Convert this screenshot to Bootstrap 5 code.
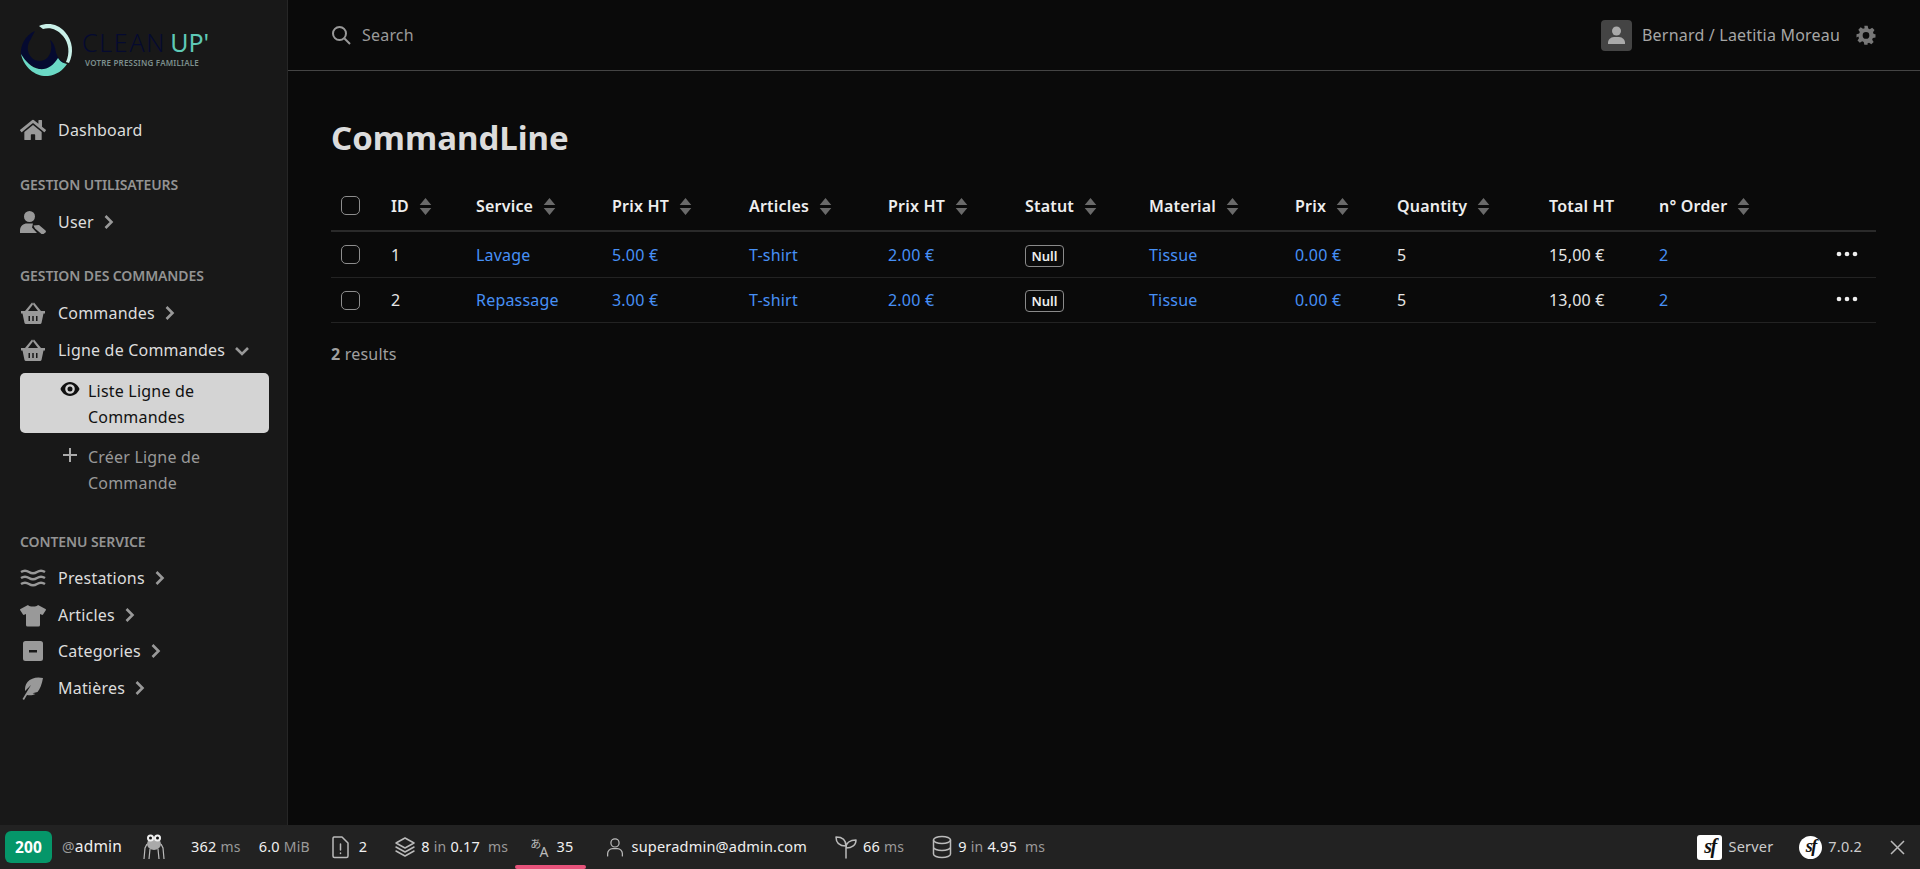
<!DOCTYPE html>
<html lang="fr" data-bs-theme="dark">
<head>
  <meta charset="UTF-8">
  <title>CommandLine</title>
  <link href="https://cdn.jsdelivr.net/npm/bootstrap@5.3.0/dist/css/bootstrap.min.css" rel="stylesheet">
  <style>
    html, body { height: 100%; }
    body {
      background: #0a0a0a;
      color: #ddd;
      font-family: "Noto Sans", "Open Sans", sans-serif;
      font-size: 16px;
      letter-spacing: 0.2px;
      overflow: hidden;
    }
    .app-top { height: 825px; }

    /* sidebar */
    .side-bar { width: 288px; background: #181818; border-right: 1px solid #262626; padding: 22px 18px 0 20px; flex-shrink: 0; }
    .logo-box { height: 56px; margin-bottom: 34px; }
    .logo-word { font-size: 25px; line-height: 26px; font-weight: 300; letter-spacing: 1.7px; color: #050a30; margin-top: 7px; white-space: nowrap; }
    .logo-word span { color: #5ec9b6; font-weight: 400; margin-left: 4px; letter-spacing: 0; }
    .logo-sub { font-size: 8px; line-height: 10px; color: #7d8f8d; letter-spacing: 0.2px; font-weight: 600; margin-top: 3px; padding-left: 3px; white-space: nowrap; }
    .side-item { height: 36.5px; color: #ddd; text-decoration: none; }
    .side-ico { width: 26px; height: 24px; fill: #999; color: #999; margin-right: 12px; flex-shrink: 0; }
    .side-chev { width: 10px; height: 16px; margin-left: 10px; fill: none; stroke: #999; stroke-width: 2.6; }
    .side-chev-down { width: 16px; height: 10px; margin-left: 9px; margin-top: 3px; fill: none; stroke: #999; stroke-width: 2.6; }
    .side-label { font-size: 14px; line-height: 20px; font-weight: 600; color: #939393; text-transform: uppercase; margin: 26px 0 9px; letter-spacing: -0.1px; }
    .side-label.wide-gap { margin-top: 33px; margin-bottom: 8px; }
    .sub-item { width: 249px; line-height: 26px; padding: 5px 8px 3px 68px; border-radius: 5px; position: relative; display: block; text-decoration: none; }
    .sub-item.on { background: #d4d4d4; color: #111; margin-top: 5px; }
    .sub-item.off { color: #999; margin-top: 6px; }
    .sub-ico { position: absolute; left: 40px; top: 6px; width: 20px; height: 20px; }

    /* header */
    .top-head { height: 71px; border-bottom: 1px solid #444; padding: 0 44px 0 43px; }
    .search-word { color: #9a9a9a; margin-left: 11px; }
    .user-pic { width: 31px; height: 31px; background: #444; border-radius: 4px; margin-right: 10px; }
    .user-name { color: #a6a6a6; }

    /* content */
    .page-body { padding: 0 44px 0 43px; }
    .page-name { font-size: 33px; line-height: 40px; font-weight: 700; color: #dcdcdc; margin: 47px 0 24px; letter-spacing: 0; }
    .cmd-table { table-layout: fixed; width: 1545px; margin: 0; --bs-table-bg: transparent; --bs-table-color: #e6e6e6; --bs-table-border-color: #232323; }
    .cmd-table col:nth-child(1) { width: 48px; }
    .cmd-table col:nth-child(2) { width: 85px; }
    .cmd-table col:nth-child(3) { width: 136px; }
    .cmd-table col:nth-child(4) { width: 137px; }
    .cmd-table col:nth-child(5) { width: 139px; }
    .cmd-table col:nth-child(6) { width: 137px; }
    .cmd-table col:nth-child(7) { width: 124px; }
    .cmd-table col:nth-child(8) { width: 146px; }
    .cmd-table col:nth-child(9) { width: 102px; }
    .cmd-table col:nth-child(10) { width: 152px; }
    .cmd-table col:nth-child(11) { width: 110px; }
    .cmd-table col:nth-child(12) { width: 133px; }
    .cmd-table col:nth-child(13) { width: 96px; }
    .cmd-table th, .cmd-table td { padding: 0 12px; vertical-align: middle; white-space: nowrap; }
    .cmd-table thead th { height: 49px; font-weight: 600; color: #eee; border-bottom: 2px solid #2a2a2a; padding-bottom: 1px; }
    .cmd-table tbody td { height: 45px; font-size: 16px; padding-top: 1px; }
    .cmd-table tbody tr:first-child td { height: 46px; }
    .cmd-table a { color: #4790f6; text-decoration: none; }
    .cmd-table .form-check-input { width: 19px; height: 19px; margin: 0 0 0 -2px; background-color: transparent; border: 1px solid #8d8d8d; border-radius: 5px; display: block; }
    .sort-ico { width: 13px; height: 17px; fill: #6a6a6a; margin-left: 10px; vertical-align: -3px; }
    .null-tag { display: inline-block; width: 39px; height: 22px; line-height: 20px; text-align: center; border: 1px solid #8a8a8a; border-radius: 4px; font-size: 13px; font-weight: 600; color: #eee; letter-spacing: 0; }
    .dots-ico { width: 22px; height: 6px; fill: #eee; display: block; margin-left: 44px; margin-top: -2px; }
    .result-line { color: #a0a0a0; margin-top: 20px; line-height: 22px; }

    /* debug toolbar */
    .dbg-bar { height: 44px; background: #222; color: #f0f0f0; font-size: 14.5px; padding: 0 15px 0 5px; flex-shrink: 0; }
    .dbg-code { width: 47px; height: 32px; line-height: 32px; background: #059669; border-radius: 6px; text-align: center; font-weight: 700; color: #fff; font-size: 15.5px; }
    .dbg-mute { color: #9a9a9a; font-size: 14px; }
    .dbg-name { font-size: 15.5px; }
    .dbg-soft { color: #ccc; }
    .dbg-ico { fill: none; stroke: #bbb; stroke-width: 1.5; stroke-linecap: round; stroke-linejoin: round; }
    .dbg-cell { height: 44px; }
    .dbg-lang { position: relative; padding: 0 12px 0 15px; }
    .dbg-lang::after { content: ""; position: absolute; left: 0; right: 0; bottom: 0; height: 4px; background: #e8537b; border-radius: 2px; }
    .lang-kana { font-family: "Noto Sans CJK JP", sans-serif; font-size: 11px; color: #bbb; position: relative; top: -4px; }
    .lang-latin { font-size: 14px; color: #bbb; position: relative; top: 4px; margin-left: -2px; }
    .sf-mark { display: inline-block; background: #fff; color: #111; font-family: "Liberation Serif", serif; font-style: italic; font-weight: 700; text-align: center; letter-spacing: -1.5px; }
    .sf-square { width: 25px; height: 25px; line-height: 23px; font-size: 20px; border-radius: 3px; }
    .sf-round { width: 23px; height: 23px; line-height: 21px; font-size: 18px; border-radius: 50%; }
    .m-a { margin-left: 10px; } .m-b { margin-left: 21px; } .m-c { margin-left: 26px; } .m-d { margin-left: 18px; }
    .m-e { margin-left: 21px; } .m-f { margin-left: 28px; } .m-g { margin-left: 7px; } .m-h { margin-left: 6px; } .m-i { margin-left: 8px; }
    .m-j { margin-left: 20px; }
  </style>
</head>
<body class="d-flex flex-column">

<svg width="0" height="0" class="position-absolute">
  <symbol id="i-house" viewBox="0 0 576 512"><path d="M280.37 148.26L96 300.11V464a16 16 0 0 0 16 16l112.06-.29a16 16 0 0 0 15.92-16V368a16 16 0 0 1 16-16h64a16 16 0 0 1 16 16v95.64a16 16 0 0 0 16 16.05L464 480a16 16 0 0 0 16-16V300L295.67 148.26a12.19 12.19 0 0 0-15.3 0zM571.6 251.47L488 182.56V44.05a12 12 0 0 0-12-12h-56a12 12 0 0 0-12 12v72.61L318.47 43a48 48 0 0 0-61 0L4.34 251.47a12 12 0 0 0-1.6 16.9l25.5 31A12 12 0 0 0 45.15 301l235.22-193.74a12.19 12.19 0 0 1 15.3 0L530.9 301a12 12 0 0 0 16.9-1.6l25.5-31a12 12 0 0 0-1.7-16.93z"/></symbol>
  <symbol id="i-usertag" viewBox="0 0 26 24"><circle cx="9.5" cy="6.5" r="5.5"/><path d="M0 23v-2.5C0 16 3.5 13.5 7 13.5h6l-1 4 5 5.500z"/><path d="M13.500 15.500l5.500-.5 6.500 5.500a1.500 1.500 0 0 1 0 2l-2 1.500a1.500 1.500 0 0 1-2 0l-6.500-5.500z"/></symbol>
  <symbol id="i-basket" viewBox="0 0 26 24"><path d="M1 10h24v2.500h-1.500L21.500 22a1.500 1.500 0 0 1-1.500 1H6a1.500 1.500 0 0 1-1.500-1L2.500 12.500H1z"/><path d="M5 10L12 1.500l1.500 1.200L8 10zM21 10L14 1.500l-1.500 1.200L18 10z"/><path fill="#181818" d="M8.500 15h1.500v5H8.500zM12.250 15h1.500v5h-1.500zM16 15h1.500v5H16z"/></symbol>
  <symbol id="i-water" viewBox="0 0 26 24"><path fill="none" stroke="currentColor" stroke-width="2.400" d="M1 6c3-2 5-2 8 0s5 2 8 0 5-2 8 0M1 12c3-2 5-2 8 0s5 2 8 0 5-2 8 0M1 18c3-2 5-2 8 0s5 2 8 0 5-2 8 0"/></symbol>
  <symbol id="i-shirt" viewBox="0 0 26 24"><path d="M8 2C9.500 4 16.500 4 18 2l7.500 4a1 1 0 0 1 .3 1.300L23 11.500a1 1 0 0 1-1.200.3L20 11v11a1.500 1.500 0 0 1-1.500 1.500h-11A1.500 1.500 0 0 1 6 22V11l-1.800.8a1 1 0 0 1-1.200-.3L.2 7.300A1 1 0 0 1 .5 6z"/></symbol>
  <symbol id="i-minus" viewBox="0 0 26 24"><path fill-rule="evenodd" d="M5.500 2h15A2.500 2.500 0 0 1 23 4.500v15a2.500 2.500 0 0 1-2.500 2.500h-15A2.500 2.500 0 0 1 3 19.500v-15A2.500 2.500 0 0 1 5.500 2zM9 11v2.500h8V11z"/></symbol>
  <symbol id="i-feather" viewBox="0 0 26 24"><path fill-rule="evenodd" d="M23 2c-6-1.500-12 0-15.500 4C5 9 5 12 5 15l6-6L2.500 23l1.500 1 3-5c3 .5 6 .3 8.500-1l-3-.7 5-1.300c2.500-3 4.500-8 5.500-14z"/></symbol>
  <symbol id="i-sort" viewBox="0 0 13 17"><path d="M6.500 0l5.800 7H.7zM6.500 17L.7 10h11.600z"/></symbol>
</svg>

<div class="app-top d-flex">
  <aside class="side-bar">
    <div class="logo-box d-flex">
      <svg width="54" height="56" viewBox="0 0 54 56" class="flex-shrink-0">
        <path d="M15 9C5 13 0 24 1 33c6 10 18 16 28 15 8-1 14-6 15-8-6-2-8-8-9-14-1-4-3-7-5-8 2 5 2 12-2 17-4 5-12 5-16 1-6-6-5-14-1-19 1-3 3-6 4-8z" fill="#050a30"/>
        <path d="M1 32c3 14 15 23 27 22 9-1 15-6 19-12-5-1-7-3-9-6-5 8-11 12-19 11C12 46 5 39 1 32z" fill="#6bd9c5"/>
        <path d="M19 4c9-4 19-2 26 6 8 9 9 21 4 31l-3-1c4-9 3-19-3-26-6-7-13-9-20-7z" fill="#c9f0e8"/>
      </svg>
      <div class="ms-2">
        <div class="logo-word">CLEAN<span>UP'</span></div>
        <div class="logo-sub">VOTRE PRESSING FAMILIALE</div>
      </div>
    </div>

    <a href="#" class="side-item d-flex align-items-center"><svg class="side-ico"><use href="#i-house"/></svg>Dashboard</a>

    <div class="side-label">Gestion utilisateurs</div>
    <a href="#" class="side-item d-flex align-items-center"><svg class="side-ico"><use href="#i-usertag"/></svg>User<svg class="side-chev" viewBox="0 0 10 16"><path d="M1.500 2l6 6-6 6"/></svg></a>

    <div class="side-label">Gestion des commandes</div>
    <a href="#" class="side-item d-flex align-items-center"><svg class="side-ico"><use href="#i-basket"/></svg>Commandes<svg class="side-chev" viewBox="0 0 10 16"><path d="M1.500 2l6 6-6 6"/></svg></a>
    <a href="#" class="side-item d-flex align-items-center"><svg class="side-ico"><use href="#i-basket"/></svg>Ligne de Commandes<svg class="side-chev-down" viewBox="0 0 16 10"><path d="M2 2l6 6 6-6"/></svg></a>
    <a href="#" class="sub-item on">
      <svg class="sub-ico" viewBox="0 0 20 20"><path fill="#111" fill-rule="evenodd" d="M10 3c5 0 8.500 4 9.500 7-1 3-4.500 7-9.500 7S1.500 13 .5 10C1.500 7 5 3 10 3zm0 2.200A4.800 4.800 0 1 0 10 14.800 4.800 4.800 0 0 0 10 5.200zm0 2.300a2.500 2.500 0 1 1 0 5 2.500 2.500 0 0 1 0-5z"/></svg>
      Liste Ligne de Commandes
    </a>
    <a href="#" class="sub-item off">
      <svg class="sub-ico" viewBox="0 0 20 20"><path fill="none" stroke="#aaa" stroke-width="2" d="M10 3v14M3 10h14"/></svg>
      Créer Ligne de Commande
    </a>

    <div class="side-label wide-gap">Contenu service</div>
    <a href="#" class="side-item d-flex align-items-center"><svg class="side-ico"><use href="#i-water"/></svg>Prestations<svg class="side-chev" viewBox="0 0 10 16"><path d="M1.500 2l6 6-6 6"/></svg></a>
    <a href="#" class="side-item d-flex align-items-center"><svg class="side-ico"><use href="#i-shirt"/></svg>Articles<svg class="side-chev" viewBox="0 0 10 16"><path d="M1.500 2l6 6-6 6"/></svg></a>
    <a href="#" class="side-item d-flex align-items-center"><svg class="side-ico"><use href="#i-minus"/></svg>Categories<svg class="side-chev" viewBox="0 0 10 16"><path d="M1.500 2l6 6-6 6"/></svg></a>
    <a href="#" class="side-item d-flex align-items-center"><svg class="side-ico"><use href="#i-feather"/></svg>Matières<svg class="side-chev" viewBox="0 0 10 16"><path d="M1.500 2l6 6-6 6"/></svg></a>
  </aside>

  <div class="flex-grow-1">
    <header class="top-head d-flex align-items-center justify-content-between">
      <div class="d-flex align-items-center">
        <svg width="20" height="20" viewBox="0 0 20 20" fill="none" stroke="#999" stroke-width="2"><circle cx="8.500" cy="8.500" r="6.500"/><path d="M13.500 13.500L19 19"/></svg>
        <span class="search-word">Search</span>
      </div>
      <div class="d-flex align-items-center">
        <span class="user-pic d-flex align-items-center justify-content-center">
          <svg width="19" height="19" viewBox="0 0 19 19" fill="#aaa"><circle cx="9.500" cy="5" r="4.500"/><path d="M1 18c-.5-4 2.500-7 6-7h5c3.500 0 6.500 3 6 7z"/></svg>
        </span>
        <span class="user-name">Bernard / Laetitia Moreau</span>
        <svg class="ms-3" width="20" height="20" viewBox="0 0 24 24" fill="#777"><path fill-rule="evenodd" d="M10 1h4l.7 3.200 1.900.8 2.800-1.800 2.800 2.800-1.800 2.800.8 1.900L23.400 11v4l-3.200.7-.8 1.900 1.800 2.800-2.800 2.800-2.800-1.800-1.900.8L14 23.600h-4l-.7-3.200-1.900-.8-2.800 1.800-2.800-2.800 1.800-2.800-.8-1.900L.6 15v-4l3.200-.7.8-1.900L2.800 5.600 5.600 2.800l2.800 1.800 1.900-.8zM12 8.500a4 4 0 1 0 0 8 4 4 0 0 0 0-8z"/></svg>
      </div>
    </header>

    <main class="page-body">
      <h1 class="page-name">CommandLine</h1>

      <table class="table cmd-table">
        <colgroup><col><col><col><col><col><col><col><col><col><col><col><col><col></colgroup>
        <thead>
          <tr>
            <th><input class="form-check-input" type="checkbox"></th>
            <th>ID<svg class="sort-ico"><use href="#i-sort"/></svg></th>
            <th>Service<svg class="sort-ico"><use href="#i-sort"/></svg></th>
            <th>Prix HT<svg class="sort-ico"><use href="#i-sort"/></svg></th>
            <th>Articles<svg class="sort-ico"><use href="#i-sort"/></svg></th>
            <th>Prix HT<svg class="sort-ico"><use href="#i-sort"/></svg></th>
            <th>Statut<svg class="sort-ico"><use href="#i-sort"/></svg></th>
            <th>Material<svg class="sort-ico"><use href="#i-sort"/></svg></th>
            <th>Prix<svg class="sort-ico"><use href="#i-sort"/></svg></th>
            <th>Quantity<svg class="sort-ico"><use href="#i-sort"/></svg></th>
            <th>Total HT</th>
            <th>n° Order<svg class="sort-ico"><use href="#i-sort"/></svg></th>
            <th></th>
          </tr>
        </thead>
        <tbody>
          <tr>
            <td><input class="form-check-input" type="checkbox"></td>
            <td>1</td>
            <td><a href="#">Lavage</a></td>
            <td><a href="#">5.00 €</a></td>
            <td><a href="#">T-shirt</a></td>
            <td><a href="#">2.00 €</a></td>
            <td><span class="null-tag">Null</span></td>
            <td><a href="#">Tissue</a></td>
            <td><a href="#">0.00 €</a></td>
            <td>5</td>
            <td>15,00 €</td>
            <td><a href="#">2</a></td>
            <td><svg class="dots-ico" viewBox="0 0 22 6"><circle cx="3" cy="3" r="2.300"/><circle cx="11" cy="3" r="2.300"/><circle cx="19" cy="3" r="2.300"/></svg></td>
          </tr>
          <tr>
            <td><input class="form-check-input" type="checkbox"></td>
            <td>2</td>
            <td><a href="#">Repassage</a></td>
            <td><a href="#">3.00 €</a></td>
            <td><a href="#">T-shirt</a></td>
            <td><a href="#">2.00 €</a></td>
            <td><span class="null-tag">Null</span></td>
            <td><a href="#">Tissue</a></td>
            <td><a href="#">0.00 €</a></td>
            <td>5</td>
            <td>13,00 €</td>
            <td><a href="#">2</a></td>
            <td><svg class="dots-ico" viewBox="0 0 22 6"><circle cx="3" cy="3" r="2.300"/><circle cx="11" cy="3" r="2.300"/><circle cx="19" cy="3" r="2.300"/></svg></td>
          </tr>
        </tbody>
      </table>

      <div class="result-line"><strong>2</strong> results</div>
    </main>
  </div>
</div>

<footer class="dbg-bar d-flex align-items-center">
  <div class="dbg-code">200</div>
  <div class="m-a"><span class="dbg-mute">@</span><span class="dbg-name">admin</span></div>
  <svg class="m-b" width="22" height="28" viewBox="0 0 22 28" fill="none" stroke="#bbb" stroke-width="1.200">
    <path d="M4 11L2 15l-1 11M18 11l2 4 1 11M7 16l-1 10M15 16l1 10"/>
    <ellipse cx="11" cy="11" rx="7" ry="6" fill="#aaa" stroke="none"/>
    <circle cx="7.500" cy="5" r="3.500" fill="#eee" stroke="none"/><circle cx="14.500" cy="5" r="3.500" fill="#eee" stroke="none"/>
    <circle cx="7.500" cy="5" r="1.500" fill="#111" stroke="none"/><circle cx="14.500" cy="5" r="1.500" fill="#111" stroke="none"/>
  </svg>
  <div class="m-c">362 <span class="dbg-mute">ms</span></div>
  <div class="m-d">6.0 <span class="dbg-mute">MiB</span></div>
  <svg class="dbg-ico m-e" width="18" height="24" viewBox="0 0 18 24"><path d="M3 2h8l6 6v13a1.500 1.500 0 0 1-1.500 1.500h-12A1.500 1.500 0 0 1 2 21V3.500A1.500 1.500 0 0 1 3 2zM9.500 9v6M9.500 18v.5"/></svg>
  <div class="m-a">2</div>
  <svg class="dbg-ico m-f" width="20" height="22" viewBox="0 0 20 22"><path d="M10 2l9 5-9 5-9-5zM1 11l9 5 9-5M1 15l9 5 9-5"/></svg>
  <div class="m-h">8 <span class="dbg-mute">in</span> 0.17 <span class="dbg-mute ms-1">ms</span></div>
  <div class="dbg-cell dbg-lang d-flex align-items-center m-g">
    <span class="lang-kana">あ</span><span class="lang-latin">A</span>
    <span class="m-i">35</span>
  </div>
  <svg class="dbg-ico m-j" width="18" height="24" viewBox="0 0 22 24"><circle cx="11" cy="7" r="5"/><path d="M2 23v-3a6 6 0 0 1 6-6h6a6 6 0 0 1 6 6v3"/></svg>
  <div class="m-i">superadmin@admin.com</div>
  <svg class="dbg-ico m-f" width="22" height="24" viewBox="0 0 22 24"><path d="M11 23V11M11 11C11 5 7 2 1 2c0 6 4 9 10 9zM11 13c0-5 4-8 10-8 0 5-4 8-10 8z"/></svg>
  <div class="m-h">66 <span class="dbg-mute">ms</span></div>
  <svg class="dbg-ico m-f" width="20" height="24" viewBox="0 0 20 24"><ellipse cx="10" cy="5" rx="8.500" ry="3.500"/><path d="M1.500 5v14c0 2 3.800 3.500 8.500 3.500s8.500-1.500 8.500-3.500V5M1.500 12c0 2 3.800 3.500 8.500 3.500s8.500-1.500 8.500-3.500"/></svg>
  <div class="m-h">9 <span class="dbg-mute">in</span> 4.95 <span class="dbg-mute ms-1">ms</span></div>

  <div class="ms-auto d-flex align-items-center dbg-soft">
    <span class="sf-mark sf-square">sf</span>
    <span class="m-h">Server</span>
    <span class="sf-mark sf-round m-c">sf</span>
    <span class="m-h">7.0.2</span>
    <svg class="m-f" width="15" height="15" viewBox="0 0 15 15" fill="none" stroke="#bbb" stroke-width="1.500"><path d="M1 1l13 13M14 1L1 14"/></svg>
  </div>
</footer>

<script src="https://cdn.jsdelivr.net/npm/bootstrap@5.3.0/dist/js/bootstrap.bundle.min.js"></script>
</body>
</html>
